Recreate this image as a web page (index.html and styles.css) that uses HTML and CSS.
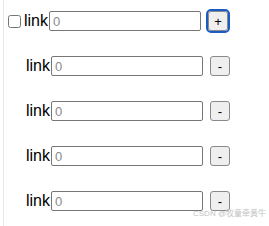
FILE: index.html
```html
<!DOCTYPE html>
<html lang="en">
<head>
	<meta charset="UTF-8">
	<title>link</title>
	<link rel="stylesheet" href="styles.css">
</head>
<body>
	<div class="tree">
		<!-- 根节点 -->
		<div class="row root">
			<input type="checkbox" class="check">
			<span class="label">link</span>
			<input type="text" class="val" placeholder="0">
			<button class="btn focus">+</button>
		</div>
		<!-- 子节点 -->
		<div class="row child">
			<span class="label">link</span>
			<input type="text" class="val" placeholder="0">
			<button class="btn">-</button>
		</div>
		<div class="row child">
			<span class="label">link</span>
			<input type="text" class="val" placeholder="0">
			<button class="btn">-</button>
		</div>
		<div class="row child">
			<span class="label">link</span>
			<input type="text" class="val" placeholder="0">
			<button class="btn">-</button>
		</div>
		<div class="row child">
			<span class="label">link</span>
			<input type="text" class="val" placeholder="0">
			<button class="btn">-</button>
		</div>
	</div>
	<div class="mark">CSDN @牧童牵黄牛</div>
</body>
</html>
```

FILE: styles.css
```css
html,body{
	margin:0;
	height:100%;
	background:#fff;
	font-family:"Liberation Sans",Arial,sans-serif;
}
.tree{
	margin-left:3px;
	border-left:1px solid #e6e6e6;
	height:100%;
	box-sizing:border-box;
	padding-top:11px;
	display:flex;
	flex-direction:column;
	gap:25px;
}
.row{
	display:flex;
	align-items:center;
	height:20px;
	font-size:16px;
	color:#000;
}
.child{
	padding-left:22px;
}
.check{
	width:13px;
	height:13px;
	margin:0 3px 0 4px;
}
.label{
	margin-right:1px;
}
.val{
	box-sizing:border-box;
	width:152px;
	height:20px;
	border:1px solid #767676;
	border-radius:2px;
	padding:1px 3px;
	font-family:"Liberation Sans",Arial,sans-serif;
	font-size:13px;
	outline:none;
}
.val::placeholder{
	color:#8a8a8a;
}
.btn{
	box-sizing:border-box;
	margin-left:7px;
	width:20px;
	height:20px;
	padding:0;
	border:1px solid #8a8a8a;
	border-radius:3px;
	background:#efefef;
	font-family:"Liberation Sans",Arial,sans-serif;
	font-size:13px;
	color:#000;
}
.focus{
	outline:2px solid #1c5cc2;
	outline-offset:0;
}
.mark{
	position:absolute;
	left:193px;
	top:207px;
	font-size:8px;
	color:#c4c4c4;
	font-family:"Liberation Sans","Noto Sans CJK SC",sans-serif;
}
```
